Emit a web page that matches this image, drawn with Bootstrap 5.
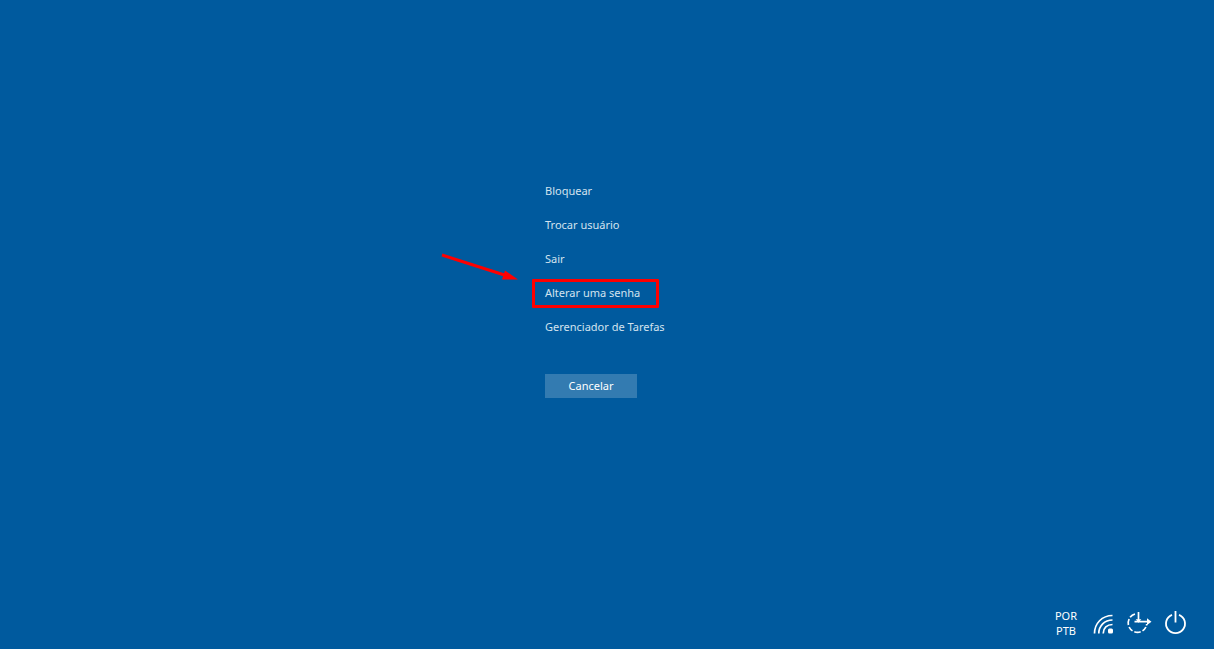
<!DOCTYPE html>
<html lang="pt-BR">
<head>
<meta charset="utf-8">
<meta name="viewport" content="width=device-width, initial-scale=1">
<title>Opções de segurança</title>
<link href="https://cdn.jsdelivr.net/npm/bootstrap@5.3.0/dist/css/bootstrap.min.css" rel="stylesheet">
<style>
body { background: #005a9e; color: #fff; font-family: "Noto Sans", "Open Sans", sans-serif; font-size: 11px; line-height: 16px; }
.security-menu { width: 124px; }
.option { height: 34px; padding: 0; border: 0; border-radius: 0; color: #d3e3ef; font-size: 11px; line-height: 16px; white-space: nowrap; }
.option:hover { color: #fff; }
.cancel { width: 92px; height: 24px; margin-top: 30px; padding: 0; border: 0; border-radius: 0; background: #337bb1; color: #fff; font-size: 11px; line-height: 16px; }
.cancel:hover { background: #4d8cbb; color: #fff; }
.highlight { left: -13px; top: 3px; width: 127px; height: 29px; border: 3px solid #f00; border-radius: 1px; pointer-events: none; }
.pointer-arrow { left: -105px; top: -24px; pointer-events: none; }
.system-bar { height: 77px; padding: 25px 26px 0 0; gap: 10px; }
.system-bar .btn { padding: 0; border: 0; color: #fff; font-size: 11px; line-height: 15px; }
.system-bar .language { margin-right: 5px; }
.system-bar svg { display: block; }
</style>
</head>
<body class="min-vh-100 d-flex flex-column">
<main class="flex-grow-1 d-flex align-items-center justify-content-center">
  <nav class="security-menu d-flex flex-column align-items-start" aria-label="Opções de segurança">
    <button type="button" class="btn option">Bloquear</button>
    <button type="button" class="btn option">Trocar usuário</button>
    <button type="button" class="btn option">Sair</button>
    <div class="position-relative">
      <button type="button" class="btn option">Alterar uma senha</button>
      <span class="highlight position-absolute"></span>
      <svg class="pointer-arrow position-absolute" width="80" height="30" viewBox="0 0 80 30" aria-hidden="true">
        <path d="M2 3 66 23.500" stroke="#f00" stroke-width="3" fill="none"/>
        <path d="M65 18.500 78 27.500 62 27.500Z" fill="#f00"/>
      </svg>
    </div>
    <button type="button" class="btn option">Gerenciador de Tarefas</button>
    <button type="button" class="btn cancel">Cancelar</button>
  </nav>
</main>
<footer class="system-bar d-flex justify-content-end align-items-center">
  <button type="button" class="btn language">POR<br>PTB</button>
  <button type="button" class="btn" aria-label="Rede">
    <svg width="24" height="28" viewBox="0 0 24 28" fill="none" stroke="#fff" stroke-width="1.700">
      <path d="M2.500 24.500C2.500 14.500 10 6.500 20.500 6.500M6.800 24.500C6.800 17 12.500 11 20.500 11M11.200 24.500C11.200 19 15 15.500 20.500 15.500"/>
      <rect x="16" y="19.500" width="5" height="5" rx="1.500" fill="#fff" stroke="none"/>
    </svg>
  </button>
  <button type="button" class="btn" aria-label="Facilidade de acesso">
    <svg width="28" height="28" viewBox="0 0 28 28" fill="none" stroke="#fff" stroke-width="1.700">
      <path d="M9 5A9.300 9.300 0 0 0 4.100 8.300M3.100 10A9.300 9.300 0 0 0 2.400 16M3.100 18A9.300 9.300 0 0 0 6.500 21.900M8.300 22.800A9.300 9.300 0 0 0 14.700 22.800M16.500 21.900A9.300 9.300 0 0 0 19.900 18M20.400 16.500A9.300 9.300 0 0 0 20.700 15"/>
      <path d="M12.500 3V13M8.500 12.700H23"/>
      <path d="M9.700 10.200h5.600l-2.800 3.500ZM21 9.300l4.500 3.400-4.500 3.400Z" fill="#fff" stroke="none"/>
    </svg>
  </button>
  <button type="button" class="btn" aria-label="Desligar">
    <svg width="24" height="28" viewBox="0 0 24 28" fill="none" stroke="#fff" stroke-width="1.800">
      <path d="M8 5.800a9.500 9.500 0 1 0 7 0M11.500 2v11.500"/>
    </svg>
  </button>
</footer>
<script src="https://cdn.jsdelivr.net/npm/bootstrap@5.3.0/dist/js/bootstrap.bundle.min.js"></script>
</body>
</html>
